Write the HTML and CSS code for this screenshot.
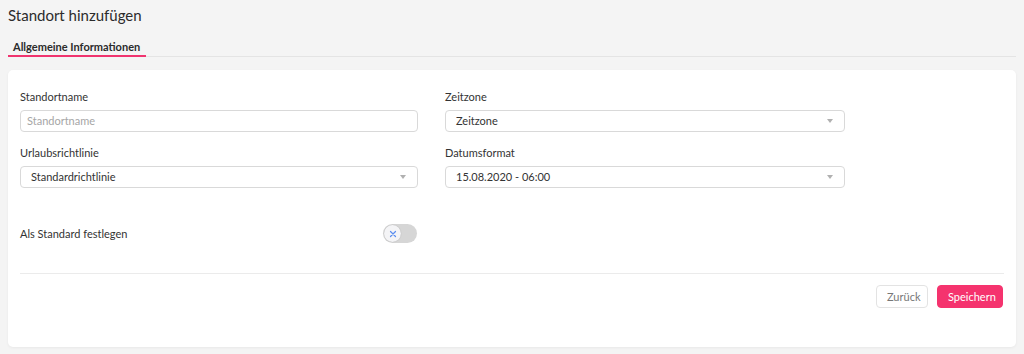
FILE: index.html
```html
<!DOCTYPE html>
<html lang="de">
<head>
<meta charset="utf-8">
<title>Standort hinzufügen</title>
<link rel="stylesheet" href="styles.css">
</head>
<body>
<header class="page-head">
  <h1 class="title">Standort hinzufügen</h1>
  <nav class="tabs">
    <span class="tab active">Allgemeine Informationen</span>
  </nav>
</header>
<main class="card">
  <div class="grid">
    <div class="field">
      <label class="label">Standortname</label>
      <div class="input placeholder">Standortname</div>
    </div>
    <div class="field">
      <label class="label">Zeitzone</label>
      <div class="input select">Zeitzone<span class="caret"></span></div>
    </div>
    <div class="field">
      <label class="label">Urlaubsrichtlinie</label>
      <div class="input select">Standardrichtlinie<span class="caret"></span></div>
    </div>
    <div class="field">
      <label class="label">Datumsformat</label>
      <div class="input select">15.08.2020 - 06:00<span class="caret"></span></div>
    </div>
    <div class="toggle-row">
      <span class="toggle-label">Als Standard festlegen</span>
      <span class="toggle">
        <span class="knob">
          <svg width="8" height="8" viewBox="0 0 8 8"><path d="M1.5 1.5L6.5 6.5M6.5 1.5L1.5 6.5" stroke="#5b8ef0" stroke-width="1.2" stroke-linecap="round"/></svg>
        </span>
      </span>
    </div>
  </div>
  <div class="divider"></div>
  <div class="actions">
    <button class="btn btn-secondary">Zurück</button>
    <button class="btn btn-primary">Speichern</button>
  </div>
</main>
</body>
</html>
```
FILE: styles.css
```css
* { box-sizing: border-box; }
html, body { margin: 0; }
body {
  background: #f4f4f4;
  font-family: Lato, "Open Sans", "Liberation Sans", sans-serif;
  color: #333;
  padding: 0 8px;
  height: 354px;
}
.page-head { padding-top: 5px; }
.title {
  margin: 0;
  font-size: 15px;
  font-weight: 400;
  line-height: 20px;
  color: #2b2b2b;
}
.tabs {
  margin-top: 14px;
  border-bottom: 1px solid #e4e4e4;
  display: flex;
}
.tab {
  font-size: 11px;
  font-weight: 700;
  line-height: 16px;
  padding: 0 6px 0 5px;
  color: #2b2b2b;
  border-bottom: 2px solid #f0346f;
  margin-bottom: -1px;
}
.card {
  margin-top: 13px;
  background: #fff;
  border-radius: 5px;
  box-shadow: 0 1px 3px rgba(0,0,0,0.05);
  padding: 19px 12px 39px;
  height: 277px;
}
.grid {
  display: grid;
  grid-template-columns: 398px 400px;
  column-gap: 27px;
  row-gap: 13px;
}
.field { display: flex; flex-direction: column; }
.label {
  font-size: 11px;
  line-height: 16px;
  color: #333;
  margin-bottom: 5px;
}
.input {
  height: 22px;
  border: 1px solid #d9d9d9;
  border-radius: 4px;
  font-size: 11px;
  line-height: 20px;
  padding: 0 10px;
  color: #333;
  display: flex;
  align-items: center;
  justify-content: space-between;
}
.input.placeholder { color: #a6a6a6; padding-left: 6px; }
.caret {
  width: 0; height: 0;
  border-left: 3.5px solid transparent;
  border-right: 3.5px solid transparent;
  border-top: 4px solid #b0b0b0;
  margin-right: 1px;
}
.toggle-row {
  grid-column: 1;
  margin-top: 23px;
  display: flex;
  justify-content: space-between;
  align-items: center;
  padding-right: 1px;
}
.toggle-label { font-size: 11px; line-height: 16px; }
.toggle {
  width: 34px;
  height: 19px;
  border-radius: 10px;
  background: #d6d6d6;
  display: flex;
  align-items: center;
  padding-left: 1px;
}
.knob {
  width: 17px;
  height: 17px;
  border-radius: 50%;
  background: #f4f4f6;
  box-shadow: 0 0 1px rgba(0,0,0,0.25);
  display: flex;
  align-items: center;
  justify-content: center;
}
.knob svg { display: block; }
.divider {
  margin-top: 30px;
  border-top: 1px solid #ebebeb;
}
.actions {
  margin-top: 11px;
  display: flex;
  justify-content: flex-end;
  gap: 9px;
  padding-right: 1px;
}
.btn {
  height: 23px;
  border-radius: 4px;
  font-family: inherit;
  font-size: 11px;
  padding: 0 10px;
  cursor: pointer;
}
.btn-secondary {
  background: #fff;
  border: 1px solid #e3e3e3;
  color: #777;
  width: 52px;
}
.btn-primary {
  background: #f5336e;
  border: 1px solid #f5336e;
  color: #fff;
  width: 66px;
}
```
